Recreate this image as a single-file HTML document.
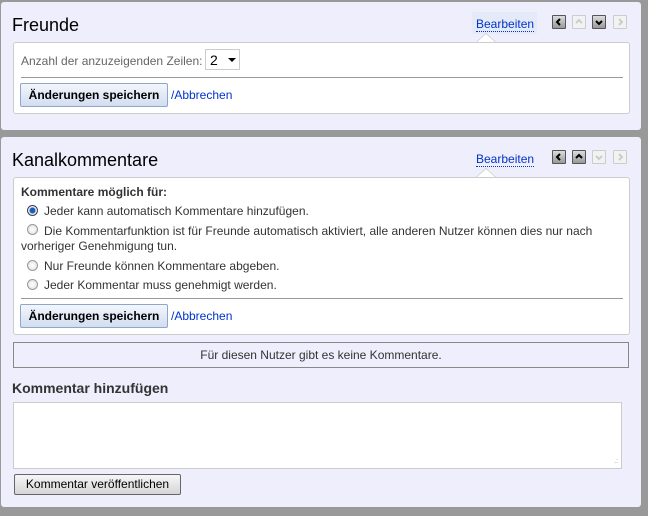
<!DOCTYPE html>
<html><head><meta charset="utf-8"><style>
*{box-sizing:border-box;margin:0;padding:0}
body{width:648px;height:516px;background:#999;font-family:"Liberation Sans",Arial,sans-serif;font-size:12px;color:#333;position:relative;overflow:hidden}
.p{position:absolute;left:1px;width:640px;background:#eeeefc;border-radius:3px}
.a{position:absolute}
h2{position:absolute;font-weight:normal;font-size:18px;color:#000;left:11px}
.box{position:absolute;left:12px;width:617px;background:#fff;border:1px solid #ccc;border-radius:3px}
.bear{position:absolute;left:471px;width:65px;height:22px;background:#e5eaf8;border-radius:2px;color:#0033cc;font-size:12px;padding:5px 0 0 4px}
.bear span{border-bottom:1px dotted #0033cc}
.tri{position:absolute;left:475px;width:0;height:0;border-left:10px solid transparent;border-right:10px solid transparent;border-bottom:9px solid #ccc}
.tri:after{content:"";position:absolute;left:-9px;top:1px;border-left:9px solid transparent;border-right:9px solid transparent;border-bottom:8px solid #fff}
.nb{position:absolute;width:14px;height:14px;border:1px solid #555;background:linear-gradient(#ddd,#999);border-radius:1px}
.nb.d{border-color:#ccc;background:#f2f2f2}
.nb svg{position:absolute;left:2px;top:2px}
.btn{position:absolute;left:6px;width:148px;height:24px;border:1px solid #8fa6cc;border-radius:2px;background:linear-gradient(#f3f6fc,#d2ddf0);font-weight:bold;font-size:12px;color:#000;text-align:center;line-height:22px}
.lnk{position:absolute;color:#0033cc;font-size:12px}
.hr{position:absolute;left:7px;width:602px;height:1px;background:#999}
.r{position:absolute;left:13px;width:11px;height:11px;border-radius:50%;border:1px solid #999;background:radial-gradient(#fff,#ddd)}
.r.on{border-color:#345;background:radial-gradient(#1a5fb0 0,#1a5fb0 2.5px,#eef 3.5px,#ddd)}
.t{position:absolute;font-size:12px;color:#333;white-space:nowrap}
</style></head><body>
<div class="p" style="top:2px;height:128px">
  <h2 style="top:13px">Freunde</h2>
  <div class="bear" style="top:10px"><span>Bearbeiten</span></div>
  <div class="tri" style="top:31px"></div>
  <div class="nb" style="left:551px;top:13px"><svg width="8" height="8"><path d="M5 1L2 4L5 7" stroke="#000" stroke-width="2" fill="none"/></svg></div>
  <div class="nb d" style="left:571px;top:13px"><svg width="8" height="8"><path d="M1 5L4 2L7 5" stroke="#ccc" stroke-width="2" fill="none"/></svg></div>
  <div class="nb" style="left:591px;top:13px"><svg width="8" height="8"><path d="M1 3L4 6L7 3" stroke="#000" stroke-width="2" fill="none"/></svg></div>
  <div class="nb d" style="left:612px;top:13px"><svg width="8" height="8"><path d="M3 1L6 4L3 7" stroke="#ccc" stroke-width="2" fill="none"/></svg></div>
  <div class="box" style="top:40px;height:72px">
    <div class="t" style="left:7px;top:11px;color:#666">Anzahl der anzuzeigenden Zeilen:</div>
    <div class="a" style="left:191px;top:6px;width:35px;height:21px;border:1px solid #ccc;font-size:14px;color:#000;padding:2px 0 0 4px">2<svg class="a" style="left:22px;top:8px" width="8" height="5"><path d="M0 0H8L4 4Z" fill="#000"/></svg></div>
    <div class="hr" style="top:34px"></div>
    <div class="btn" style="top:40px">Änderungen speichern</div>
    <div class="lnk" style="left:157px;top:45px">/Abbrechen</div>
  </div>
</div>
<div class="p" style="top:137px;height:370px">
  <h2 style="top:13px">Kanalkommentare</h2>
  <div class="bear" style="top:10px;background:none"><span>Bearbeiten</span></div>
  <div class="tri" style="top:31px"></div>
  <div class="nb" style="left:551px;top:13px"><svg width="8" height="8"><path d="M5 1L2 4L5 7" stroke="#000" stroke-width="2" fill="none"/></svg></div>
  <div class="nb" style="left:571px;top:13px"><svg width="8" height="8"><path d="M1 5L4 2L7 5" stroke="#000" stroke-width="2" fill="none"/></svg></div>
  <div class="nb d" style="left:591px;top:13px"><svg width="8" height="8"><path d="M1 3L4 6L7 3" stroke="#ccc" stroke-width="2" fill="none"/></svg></div>
  <div class="nb d" style="left:612px;top:13px"><svg width="8" height="8"><path d="M3 1L6 4L3 7" stroke="#ccc" stroke-width="2" fill="none"/></svg></div>
  <div class="box" style="top:40px;height:158px">
    <div class="t" style="left:7px;top:7px;font-weight:bold">Kommentare möglich für:</div>
    <div class="r on" style="top:27px"></div><div class="t" style="left:30px;top:26px">Jeder kann automatisch Kommentare hinzufügen.</div>
    <div class="r" style="top:46px"></div><div class="t" style="left:30px;top:46px">Die Kommentarfunktion ist für Freunde automatisch aktiviert, alle anderen Nutzer können dies nur nach</div>
    <div class="t" style="left:7px;top:61px">vorheriger Genehmigung tun.</div>
    <div class="r" style="top:82px"></div><div class="t" style="left:30px;top:81px">Nur Freunde können Kommentare abgeben.</div>
    <div class="r" style="top:101px"></div><div class="t" style="left:30px;top:100px">Jeder Kommentar muss genehmigt werden.</div>
    <div class="hr" style="top:120px"></div>
    <div class="btn" style="top:126px">Änderungen speichern</div>
    <div class="lnk" style="left:157px;top:131px">/Abbrechen</div>
  </div>
  <div class="a" style="left:12px;top:205px;width:616px;height:26px;border:1px solid #888;text-align:center;line-height:24px;color:#333">Für diesen Nutzer gibt es keine Kommentare.</div>
  <div class="t" style="left:11px;top:243px;font-weight:bold;font-size:14px">Kommentar hinzufügen</div>
  <div class="a" style="left:12px;top:265px;width:609px;height:67px;background:#fff;border:1px solid #ccc"><div class="a" style="right:3px;bottom:3px;font-size:7px;color:#999;line-height:6px">.:</div></div>
  <div class="a" style="left:13px;top:337px;width:167px;height:21px;border:1px solid #666;border-radius:2px;background:linear-gradient(#f6f6f6,#d6d6d6);text-align:center;line-height:19px;color:#000">Kommentar veröffentlichen</div>
</div>
</body></html>
